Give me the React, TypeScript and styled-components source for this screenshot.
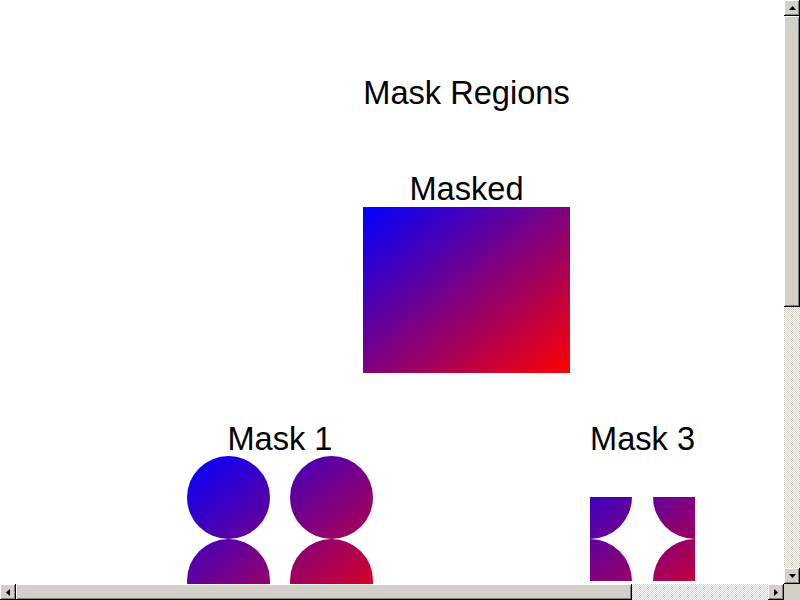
import React from 'react';
import styled, { createGlobalStyle } from 'styled-components';

const GlobalStyle = createGlobalStyle`
  html, body {
    margin: 0;
    padding: 0;
    background: #ffffff;
  }
`;

const gray = '#d4d0c8';

function Arrow({ dir }: { dir: 'up' | 'down' | 'left' | 'right' }) {
  const points = {
    up: '0,4 7,4 3.5,0',
    down: '0,0 7,0 3.5,4',
    left: '4,0 4,7 0,3.5',
    right: '0,0 0,7 4,3.5',
  }[dir];
  const vertical = dir === 'up' || dir === 'down';
  return (
    <svg width={vertical ? 7 : 4} height={vertical ? 4 : 7} viewBox={vertical ? '0 0 7 4' : '0 0 4 7'}>
      <polygon points={points} fill="#000" />
    </svg>
  );
}

function CircleMask() {
  return (
    <MaskArt width={186} height={166} viewBox="0 0 186 166">
      <defs>
        <linearGradient id="g1" x1="0" y1="0" x2="1" y2="1">
          <stop offset="0" stopColor="#0000ff" />
          <stop offset="1" stopColor="#ff0000" />
        </linearGradient>
        <mask id="m1">
          <circle cx={41.5} cy={41.5} r={41.5} fill="#fff" />
          <circle cx={144.5} cy={41.5} r={41.5} fill="#fff" />
          <circle cx={41.5} cy={124.5} r={41.5} fill="#fff" />
          <circle cx={144.5} cy={124.5} r={41.5} fill="#fff" />
        </mask>
      </defs>
      <rect x={0} y={0} width={207} height={166} fill="url(#g1)" mask="url(#m1)" />
    </MaskArt>
  );
}

function CornerMask() {
  return (
    <MaskArt width={105} height={84} viewBox="0 0 105 84">
      <defs>
        <linearGradient id="g3" x1="0" y1="0" x2="1" y2="1">
          <stop offset="0" stopColor="#0000ff" />
          <stop offset="1" stopColor="#ff0000" />
        </linearGradient>
        <mask id="m3">
          <circle cx={0} cy={0} r={42} fill="#fff" />
          <circle cx={105} cy={0} r={42} fill="#fff" />
          <circle cx={0} cy={84} r={42} fill="#fff" />
          <circle cx={105} cy={84} r={42} fill="#fff" />
        </mask>
      </defs>
      <rect x={-51} y={-41} width={207} height={166} fill="url(#g3)" mask="url(#m3)" />
    </MaskArt>
  );
}

function App() {
  return (
    <>
      <GlobalStyle />
      <Window>
        <Canvas>
          <TopBlock>
            <Title>Mask Regions</Title>
            <Label $gap={0}>Masked</Label>
            <GradientBox />
          </TopBlock>
          <BottomRow>
            <Group $width={186}>
              <Label $gap={-1}>Mask 1</Label>
              <CircleMask />
            </Group>
            <Group $width={105}>
              <Label $gap={40}>Mask 3</Label>
              <CornerMask />
            </Group>
          </BottomRow>
        </Canvas>

        <VScroll>
          <ArrowButton>
            <Arrow dir="up" />
          </ArrowButton>
          <Thumb $size={291} />
          <Track />
          <ArrowButton>
            <Arrow dir="down" />
          </ArrowButton>
        </VScroll>

        <HScroll>
          <ArrowButton>
            <Arrow dir="left" />
          </ArrowButton>
          <Thumb $size={616} $horizontal />
          <Track />
          <ArrowButton>
            <Arrow dir="right" />
          </ArrowButton>
        </HScroll>

        <Corner />
      </Window>
    </>
  );
}

export default App;

const Window = styled.div`
  width: 800px;
  height: 600px;
  display: grid;
  grid-template-columns: 784px 16px;
  grid-template-rows: 584px 16px;
  background: #ffffff;
  overflow: hidden;
`;

const Canvas = styled.div`
  overflow: hidden;
  background: #ffffff;
  display: flex;
  flex-direction: column;
  padding-top: 75px;
  font-family: 'Liberation Sans', Arial, sans-serif;
  color: #000000;
`;

const TopBlock = styled.div`
  width: 207px;
  margin-left: 363px;
  display: flex;
  flex-direction: column;
  align-items: center;
`;

const Title = styled.div`
  font-size: 32.6px;
  line-height: 36px;
  white-space: nowrap;
  margin-bottom: 60px;
`;

const Label = styled.div<{ $gap: number }>`
  font-size: 32.6px;
  line-height: 36px;
  white-space: nowrap;
  margin-bottom: ${(p) => p.$gap}px;
`;

const GradientBox = styled.div`
  width: 207px;
  height: 166px;
  background: linear-gradient(to bottom right, #0000ff, #ff0000);
`;

const BottomRow = styled.div`
  display: flex;
  align-items: flex-start;
  gap: 217px;
  margin-left: 187px;
  margin-top: 48px;
`;

const Group = styled.div<{ $width: number }>`
  width: ${(p) => p.$width}px;
  display: flex;
  flex-direction: column;
  align-items: center;
  flex-shrink: 0;
`;

const MaskArt = styled.svg`
  display: block;
  flex-shrink: 0;
  overflow: hidden;
`;

const VScroll = styled.div`
  display: flex;
  flex-direction: column;
  background: ${gray};
`;

const HScroll = styled.div`
  display: flex;
  flex-direction: row;
  background: ${gray};
`;

const ArrowButton = styled.div`
  width: 16px;
  height: 16px;
  flex-shrink: 0;
  box-sizing: border-box;
  display: flex;
  align-items: center;
  justify-content: center;
  background: ${gray};
  box-shadow: inset -1px -1px #000000, inset 1px 1px #ffffff, inset -2px -2px #808080;
`;

const Thumb = styled.div<{ $size: number; $horizontal?: boolean }>`
  flex-shrink: 0;
  width: ${(p) => (p.$horizontal ? `${p.$size}px` : '16px')};
  height: ${(p) => (p.$horizontal ? '16px' : `${p.$size}px`)};
  background: ${gray};
  box-shadow: inset -1px -1px #000000, inset 1px 1px #ffffff, inset -2px -2px #808080;
`;

const Track = styled.div`
  flex: 1;
  background-color: #ffffff;
  background-image: conic-gradient(${gray} 25%, #ffffff 0 50%, ${gray} 0 75%, #ffffff 0);
  background-size: 2px 2px;
`;

const Corner = styled.div`
  background: ${gray};
`;
